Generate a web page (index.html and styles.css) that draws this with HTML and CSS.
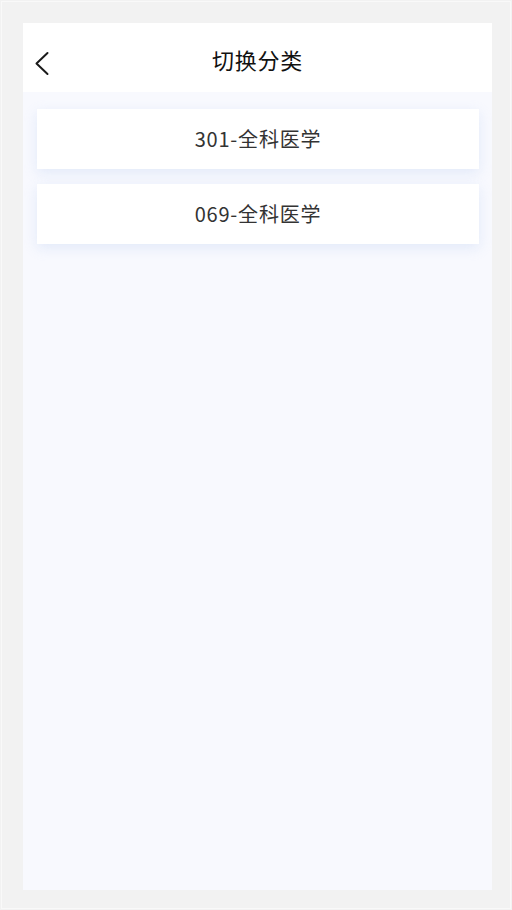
FILE: index.html
```html
<!DOCTYPE html>
<html lang="zh-CN">
<head>
<meta charset="utf-8">
<title>切换分类</title>
<link rel="stylesheet" href="styles.css">
</head>
<body>
<div class="frame">
  <div class="phone">
    <header class="navbar">
      <span class="back" aria-label="返回">
        <svg width="16" height="26" viewBox="0 0 16 26"><path d="M13.5 2 L2.5 12.5 L13.5 23" fill="none" stroke="#1a1a1a" stroke-width="2" stroke-linecap="round" stroke-linejoin="round"/></svg>
      </span>
      <h1 class="title">切换分类</h1>
    </header>
    <main class="list">
      <div class="card">301-全科医学</div>
      <div class="card">069-全科医学</div>
    </main>
  </div>
</div>
</body>
</html>
```

FILE: styles.css
```css
* { box-sizing: border-box; }
html, body {
  margin: 0;
  padding: 0;
  width: 512px;
  height: 910px;
  background: #f2f2f2;
  font-family: "Noto Sans CJK SC", "Noto Sans", sans-serif;
}
.frame {
  margin: 1px;
  width: 510px;
  height: 908px;
  border: 1px solid #f9f9f9;
  padding: 21px 19px 18px 21px;
}
.phone {
  width: 469px;
  height: 867px;
  background: #f8f9fe;
  display: flex;
  flex-direction: column;
}
.navbar {
  height: 69px;
  background: #ffffff;
  position: relative;
  display: flex;
  align-items: center;
  justify-content: center;
}
.back {
  position: absolute;
  left: 11px;
  top: 28px;
  width: 16px;
  height: 26px;
  display: block;
}
.back svg { display: block; }
.title {
  margin: 0;
  font-size: 22px;
  font-weight: 400;
  color: #111;
  letter-spacing: 0.8px;
  line-height: 1;
  padding-top: 3px;
}
.list {
  padding: 17px 13px 0 14px;
  display: flex;
  flex-direction: column;
  gap: 15px;
}
.card {
  height: 60px;
  background: #ffffff;
  box-shadow: 0 4px 12px rgba(200, 215, 245, 0.45);
  display: flex;
  align-items: center;
  justify-content: center;
  font-size: 20px;
  color: #333;
  letter-spacing: 0.8px;
  padding-bottom: 2px;
}
```
